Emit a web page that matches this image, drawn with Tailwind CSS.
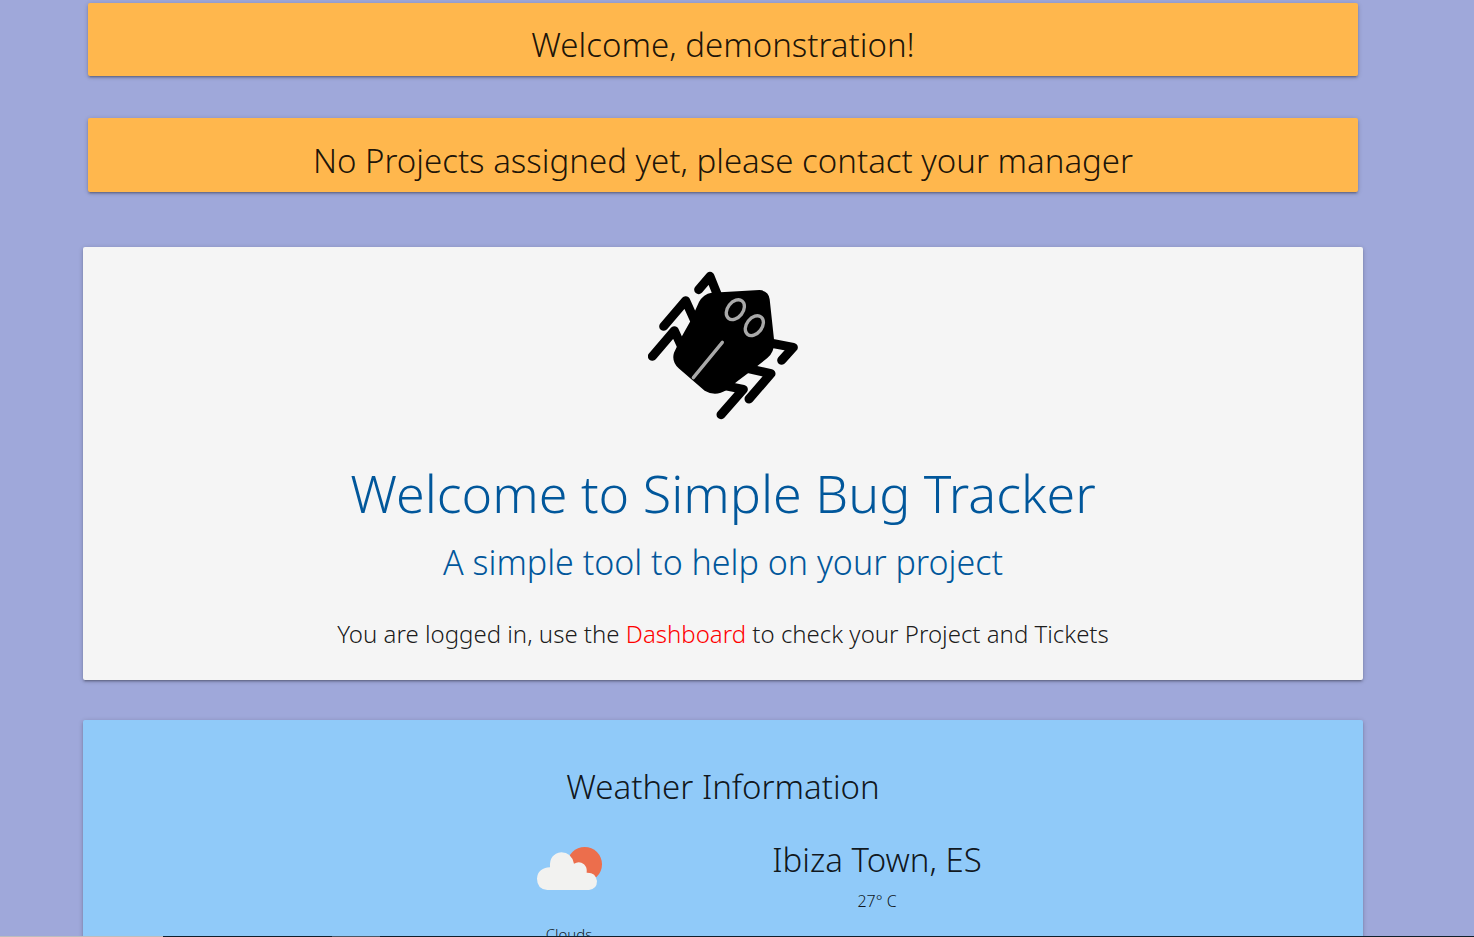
<!DOCTYPE html>
<html lang="en">
<head>
<meta charset="utf-8">
<meta name="viewport" content="width=device-width, initial-scale=1">
<title>Simple Bug Tracker</title>
<script src="https://cdn.jsdelivr.net/npm/@tailwindcss/browser@4"></script>
</head>
<body class="h-screen overflow-hidden bg-[#9fa8da] font-['Noto_Sans','Open_Sans',sans-serif] font-light text-black/90">
<main class="flex flex-col pr-7 pt-[3px]">
  <div class="mx-auto flex w-full max-w-[1280px] flex-col gap-[42px] px-[5px] text-center">
    <h2 class="rounded-xs bg-[#ffb74d] pt-5 pb-[9px] text-[33px] leading-[44px] shadow-[0_2px_2px_rgba(0,0,0,0.14),0_3px_1px_-2px_rgba(0,0,0,0.12),0_1px_5px_rgba(0,0,0,0.2)]">Welcome, demonstration!</h2>
    <h2 class="rounded-xs bg-[#ffb74d] pt-[21px] pb-[9px] text-[33px] leading-[44px] shadow-[0_2px_2px_rgba(0,0,0,0.14),0_3px_1px_-2px_rgba(0,0,0,0.12),0_1px_5px_rgba(0,0,0,0.2)]">No Projects assigned yet, please contact your manager</h2>
  </div>

  <section class="mx-auto mt-[55px] flex w-full max-w-[1280px] flex-col items-center rounded-xs bg-[#f5f5f5] pt-[23px] pb-7 text-center shadow-[0_2px_2px_rgba(0,0,0,0.14),0_3px_1px_-2px_rgba(0,0,0,0.12),0_1px_5px_rgba(0,0,0,0.2)]">
    <svg class="size-[150px]" viewBox="24 24 450 450" fill="none" stroke-linecap="round" stroke-linejoin="round" role="img" aria-label="Bug">
      <path d="M215 92 L358 84 Q386 86 389 112 L402 232 Q406 268 382 288 Q340 322 292 358 L260 384 Q226 405 194 386 L116 319 Q94 298 102 272 L124 226 L151 178 L177 120 Q190 96 215 92Z" fill="#000"/>
      <g stroke="#000" stroke-width="27">
        <path d="M176 83 L210 43 L232 98"/>
        <path d="M71 193 L137 116 L165 178"/>
        <path d="M37 283 L103 206 L124 252"/>
        <path d="M390 243 L460 256 L425 295"/>
        <path d="M325 320 L393 335 L327 411"/>
        <path d="M250 370 L310 382 L243 458"/>
      </g>
      <g stroke="#a9a9a9" stroke-width="10">
        <ellipse cx="286" cy="143" rx="23" ry="33" transform="rotate(38 286 143)"/>
        <ellipse cx="343" cy="191" rx="23" ry="33" transform="rotate(38 343 191)"/>
        <path d="M247 241 L160 347"/>
      </g>
    </svg>
    <h1 class="mt-[37px] text-[52px] leading-[72px] text-[#01579b]">Welcome to Simple Bug Tracker</h1>
    <h2 class="mt-[9px] text-[34px] leading-[48px] text-[#01579b]">A simple tool to help on your project</h2>
    <p class="mt-[30px] text-2xl leading-9">You are logged in, use the <a href="#dashboard" class="text-[#ff0000]">Dashboard</a> to check your Project and Tickets</p>
  </section>

  <section class="mx-auto mt-10 w-full max-w-[1280px] rounded-xs bg-[#90caf9] px-6 pt-[43px] pb-10 text-center shadow-[0_2px_2px_rgba(0,0,0,0.14),0_3px_1px_-2px_rgba(0,0,0,0.12),0_1px_5px_rgba(0,0,0,0.2)]">
    <h2 class="text-[33px] leading-[48px]">Weather Information</h2>
    <div class="mx-auto mt-[27px] grid w-1/2 grid-cols-2">
      <div class="flex flex-col items-center">
        <svg class="h-[60px] w-[66px]" viewBox="48 24 198 180" role="img" aria-label="Cloudy with sun">
          <circle cx="194" cy="103" r="52" fill="#ec6e4c"/>
          <path d="M82 180 Q51 177 51 146 Q53 114 90 112 Q87 72 124 67 Q154 67 162 101 Q178 91 192 103 Q202 112 200 128 Q228 127 231 153 Q231 177 207 180Z" fill="#f2f2f0"/>
        </svg>
        <p class="mt-6 text-[15px] leading-6">Clouds</p>
      </div>
      <div>
        <h3 class="text-[33px] leading-[44px]">Ibiza Town, ES</h3>
        <p class="mt-[7px] text-base">27° C</p>
      </div>
    </div>
  </section>
</main>
<!-- Thin strip along the window's lower edge -->
<div class="fixed inset-x-0 bottom-0 flex h-px bg-[#10202c]" aria-hidden="true">
  <div class="w-[163px] bg-[#bdbdbd]"></div>
  <div class="ml-[169px] w-12 bg-[#4a5866]"></div>
</div>
</body>
</html>
